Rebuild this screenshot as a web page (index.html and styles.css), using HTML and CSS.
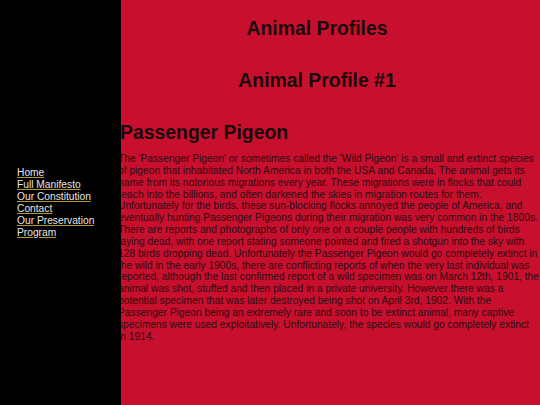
FILE: index.html
```html
<!DOCTYPE html>
<html lang="en">
<head>
<meta charset="utf-8">
<title>Animal Profiles</title>
<link rel="stylesheet" href="styles.css">
</head>
<body>
<nav class="sidebar">
  <ul class="nav-list">
    <li><a href="#">Home</a></li>
    <li><a href="#">Full Manifesto</a></li>
    <li><a href="#">Our Constitution</a></li>
    <li><a href="#">Contact</a></li>
    <li><a href="#">Our Preservation Program</a></li>
  </ul>
</nav>
<main class="content">
  <header class="page-header">
    <h1 class="site-title">Animal Profiles</h1>
    <h1 class="profile-title">Animal Profile #1</h1>
  </header>
  <section class="profile">
    <h2 class="animal-name">Passenger Pigeon</h2>
    <p class="animal-text">The 'Passenger Pigeon' or sometimes called the 'Wild Pigeon' is a small and extinct species of pigeon that inhabitated North America in both the USA and Canada. The animal gets its name from its notorious migrations every year. These migrations were in flocks that could reach into the billions, and often darkened the skies in migration routes for them.<br>Unfortunately for the birds, these sun-blocking flocks annoyed the people of America, and eventually hunting Passenger Pigeons during their migration was very common in the 1800s. There are reports and photographs of only one or a couple people with hundreds of birds laying dead, with one report stating someone pointed and fired a shotgun into the sky with 128 birds dropping dead. Unfortunately the Passenger Pigeon would go completely extinct in the wild in the early 1900s, there are conflicting reports of when the very last individual was reported, although the last confirmed report of a wild specimen was on March 12th, 1901, the animal was shot, stuffed and then placed in a private university. However there was a potential specimen that was later destroyed being shot on April 3rd, 1902. With the Passenger Pigeon being an extremely rare and soon to be extinct animal, many captive specimens were used exploitatively. Unfortunately, the species would go completely extinct <span class="nowrap">in 1914.</span></p>
  </section>
</main>
</body>
</html>
```
FILE: styles.css
```css
html, body {
  margin: 0;
  padding: 0;
}
body {
  background: #c8102e;
  font-family: "Liberation Sans", Arial, sans-serif;
  color: #1a0a0c;
  min-height: 405px;
}
.sidebar {
  position: fixed;
  top: 0;
  left: 0;
  bottom: 0;
  width: 121px;
  background: #000;
  display: flex;
  flex-direction: column;
  justify-content: center;
  z-index: 2;
}
.nav-list {
  list-style: none;
  margin: 0;
  padding: 0 0 0 17px;
  width: 82px;
}
.nav-list li {
  font-size: 10.24px;
  line-height: 12px;
}
.nav-list a {
  color: #e6e6e6;
  text-decoration: underline;
  text-decoration-color: #b8922a;
  text-underline-offset: 1px;
}
.content {
  margin-left: 118px;
  margin-right: 0;
  padding-top: 17px;
}
.page-header {
  text-align: center;
  padding-right: 24px;
}
.site-title,
.profile-title {
  font-size: 19.4px;
  line-height: 23px;
  margin: 0 0 29px;
}
.animal-name {
  font-size: 19.4px;
  line-height: 23px;
  margin: 0 0 9px;
  padding-left: 2px;
}
.animal-text {
  font-size: 10.24px;
  line-height: 11.85px;
  margin: 0;
  color: #2a0a0e;
}
.nowrap {
  white-space: nowrap;
}
```
